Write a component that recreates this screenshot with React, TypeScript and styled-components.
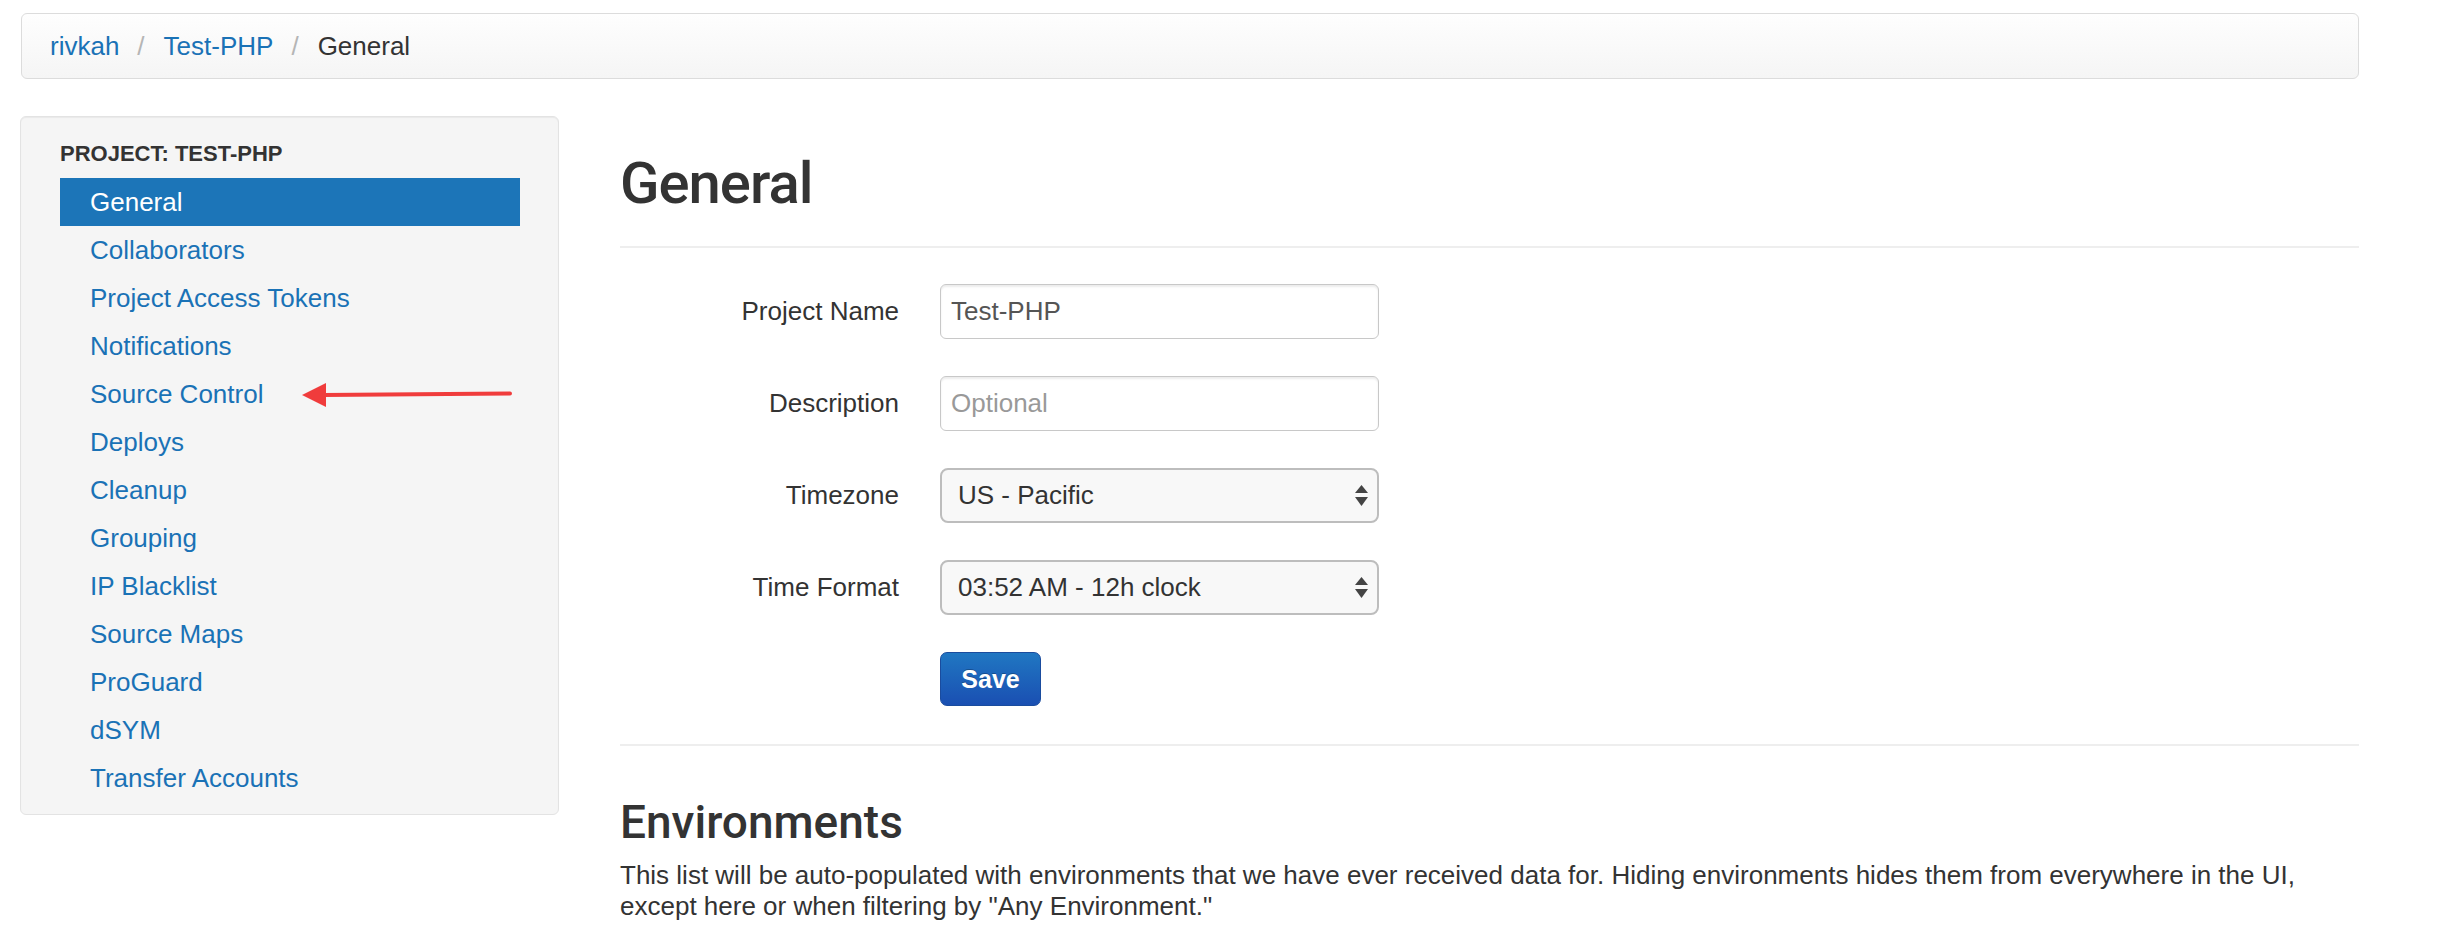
import styled, { createGlobalStyle } from "styled-components"

const GlobalStyle = createGlobalStyle`
  html, body {
    margin: 0;
    padding: 0;
    overflow: hidden;
    background: #fff;
  }
  body {
    font-family: "Liberation Sans", Arial, sans-serif;
    font-size: 26px;
    color: #333;
  }
`

const Page = styled.div`
  padding: 13px 85px 0 20px;
`

const Breadcrumb = styled.nav`
  display: flex;
  align-items: center;
  height: 64px;
  padding: 0 28px;
  margin-left: 1px;
  border: 1px solid #dcdcdc;
  border-radius: 6px;
  background: linear-gradient(#fefefe, #f5f5f5);
  line-height: 37px;
`

const Crumb = styled.a<{ $current?: boolean }>`
  color: ${(p) => (p.$current ? "#333" : "#1a72b6")};
  text-decoration: none;
`

const Divider = styled.span`
  color: #b5b5b5;
  padding: 0 19px 0 18px;
`

const Columns = styled.div`
  display: grid;
  grid-template-columns: 539px 1fr;
  column-gap: 61px;
  margin-top: 37px;
  align-items: start;
`

const Sidebar = styled.aside`
  position: relative;
  padding: 24px 38px 12px 39px;
  background: #f5f5f5;
  border: 1px solid #e3e3e3;
  border-radius: 6px;
  box-shadow: inset 0 1px 1px rgba(0, 0, 0, 0.05);
`

const NavHeader = styled.div`
  font-size: 22px;
  line-height: 26px;
  font-weight: bold;
  color: #333;
  text-transform: uppercase;
  margin-bottom: 11px;
`

const NavList = styled.ul`
  list-style: none;
  margin: 0;
  padding: 0;
`

const NavItem = styled.li<{ $active?: boolean }>`
  height: 48px;
  line-height: 48px;
  padding-left: 30px;
  background: ${(p) => (p.$active ? "#1c75b8" : "transparent")};
  color: ${(p) => (p.$active ? "#fff" : "#1a72b6")};
`

const Arrow = styled.svg`
  position: absolute;
  left: 280px;
  top: 264px;
`

const Main = styled.main`
  display: flex;
  flex-direction: column;
`

const Title = styled.h1<{ $size: number }>`
  margin: 0;
  font-family: Roboto, "Liberation Sans", sans-serif;
  font-weight: 500;
  font-size: ${(p) => p.$size}px;
  line-height: ${(p) => p.$size}px;
  letter-spacing: ${(p) => (p.$size > 50 ? "-1px" : "0")};
  color: #333;
`

const Rule = styled.hr`
  margin: 0;
  border: 0;
  height: 2px;
  background: #eee;
`

const Form = styled.form`
  display: grid;
  grid-template-columns: 279px 439px;
  column-gap: 41px;
  row-gap: 37px;
  align-items: center;
  margin: 36px 0 38px;
`

const Label = styled.label`
  text-align: right;
  color: #333;
`

const TextInput = styled.input`
  box-sizing: border-box;
  height: 55px;
  width: 100%;
  padding: 0 10px;
  font: inherit;
  color: #555;
  background: #fff;
  border: 1px solid #c8c8c8;
  border-radius: 6px;
  box-shadow: inset 0 2px 2px rgba(0, 0, 0, 0.075);
  outline: none;
  &::placeholder {
    color: #999;
  }
`

const SelectBox = styled.div`
  box-sizing: border-box;
  height: 55px;
  display: flex;
  align-items: center;
  justify-content: space-between;
  padding: 0 9px 0 16px;
  background: #f8f8f8;
  border: 2px solid #bdbdbd;
  border-radius: 8px;
  color: #333;
`

const SaveButton = styled.button`
  grid-column: 2;
  justify-self: start;
  width: 101px;
  height: 54px;
  padding: 0;
  font: inherit;
  font-size: 25px;
  font-weight: bold;
  color: #fff;
  background: linear-gradient(#2077c2, #1a4fb2);
  border: 1px solid #1a4c9e;
  border-radius: 7px;
  text-shadow: 0 -1px 0 rgba(0, 0, 0, 0.25);
`

const Copy = styled.p`
  margin: 15px 0 0;
  line-height: 31px;
  color: #333;
`

const Spinner = () => (
  <svg width="13" height="21" viewBox="0 0 13 21">
    <polygon points="6.5,0 13,8 0,8" fill="#444" />
    <polygon points="0,12 13,12 6.5,21" fill="#444" />
  </svg>
)

const navItems = [
  "General",
  "Collaborators",
  "Project Access Tokens",
  "Notifications",
  "Source Control",
  "Deploys",
  "Cleanup",
  "Grouping",
  "IP Blacklist",
  "Source Maps",
  "ProGuard",
  "dSYM",
  "Transfer Accounts",
]

const App = () => {
  return (
    <>
      <GlobalStyle />
      <Page>
        <Breadcrumb>
          <Crumb href="#">rivkah</Crumb>
          <Divider>/</Divider>
          <Crumb href="#">Test-PHP</Crumb>
          <Divider>/</Divider>
          <Crumb $current>General</Crumb>
        </Breadcrumb>

        <Columns>
          <Sidebar>
            <NavHeader>Project: Test-PHP</NavHeader>
            <NavList>
              {navItems.map((item) => (
                <NavItem key={item} $active={item === "General"}>
                  {item}
                </NavItem>
              ))}
            </NavList>
            <Arrow width="212" height="28" viewBox="0 0 212 28">
              <line
                x1="22"
                y1="14"
                x2="209"
                y2="12.5"
                stroke="#f03c3c"
                strokeWidth="4"
                strokeLinecap="round"
              />
              <polygon points="1,14 25,2 25,26" fill="#f03c3c" />
            </Arrow>
          </Sidebar>

          <Main>
            <Title $size={58} style={{ marginTop: 38, marginBottom: 34 }}>
              General
            </Title>
            <Rule />
            <Form onSubmit={(e) => e.preventDefault()}>
              <Label>Project Name</Label>
              <TextInput defaultValue="Test-PHP" />
              <Label>Description</Label>
              <TextInput placeholder="Optional" />
              <Label>Timezone</Label>
              <SelectBox>
                <span>US - Pacific</span>
                <Spinner />
              </SelectBox>
              <Label>Time Format</Label>
              <SelectBox>
                <span>03:52 AM - 12h clock</span>
                <Spinner />
              </SelectBox>
              <SaveButton type="submit">Save</SaveButton>
            </Form>
            <Rule />
            <Title $size={46} style={{ marginTop: 53 }}>
              Environments
            </Title>
            <Copy>
              This list will be auto-populated with environments that we have
              ever received data for. Hiding environments hides them from
              everywhere in the UI, except here or when filtering by "Any
              Environment."
            </Copy>
          </Main>
        </Columns>
      </Page>
    </>
  )
}

export default App
